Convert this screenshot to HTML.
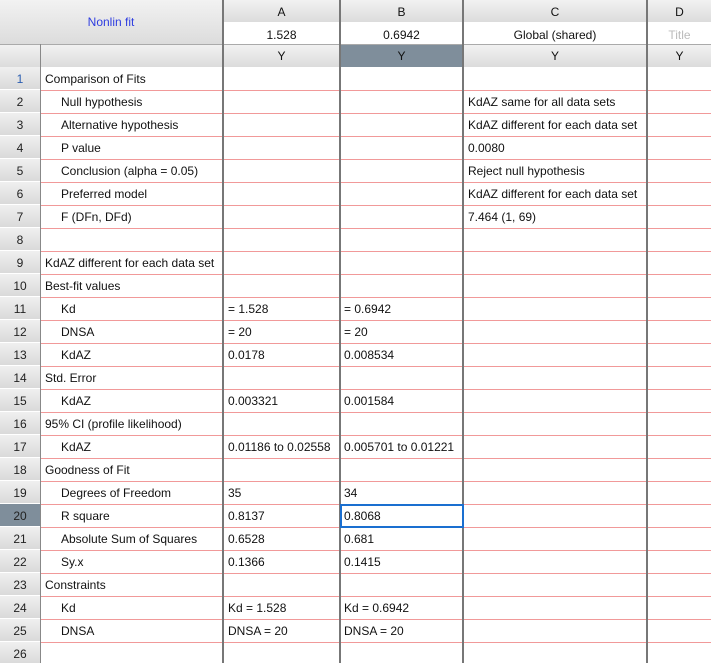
<!DOCTYPE html>
<html><head><meta charset="utf-8"><style>
html,body{margin:0;width:711px;height:663px;overflow:hidden}
body{background:#fff;font-family:"Liberation Sans",sans-serif;font-size:12px;color:#111;position:relative}
.a{position:absolute;box-sizing:border-box}
.hd{background:linear-gradient(#f2f2f2,#dcdcdc);text-align:center}
.row{position:absolute;left:0;width:711px;height:23px}
.row .n{position:absolute;left:0;width:40px;height:22px;top:0;background:linear-gradient(#f0f0f0,#dadada);border-bottom:1px solid #fff;text-align:center;line-height:25px;font-size:12px;color:#222}
.row .c{position:absolute;left:41px;right:0;height:23px;border-bottom:1px solid #f19999}
.row span{position:absolute;top:5px;white-space:nowrap}
.l{left:45px}.li{left:61px}.x{left:228px}.y{left:344px}.z{left:468px}
.v{position:absolute;top:0;height:663px;background:#777;width:2px}
</style></head><body>
<div class="a hd" style="left:0;top:0;width:222px;height:44px;color:#2e3de0;line-height:44px;padding-left:0">Nonlin fit</div>
<div class="a hd" style="left:0;top:45px;width:40px;height:22px"></div>
<div class="a hd" style="left:41px;top:45px;width:181px;height:22px"></div>
<div class="a hd" style="left:224px;top:0;width:115px;height:22px;line-height:24px">A</div>
<div class="a hd" style="left:341px;top:0;width:121px;height:22px;line-height:24px">B</div>
<div class="a hd" style="left:464px;top:0;width:182px;height:22px;line-height:24px">C</div>
<div class="a hd" style="left:648px;top:0;width:63px;height:22px;line-height:24px">D</div>
<div class="a" style="left:224px;top:23px;width:115px;height:21px;text-align:center;line-height:24px">1.528</div>
<div class="a" style="left:341px;top:23px;width:121px;height:21px;text-align:center;line-height:24px">0.6942</div>
<div class="a" style="left:464px;top:23px;width:182px;height:21px;text-align:center;line-height:24px">Global (shared)</div>
<div class="a" style="left:648px;top:23px;width:63px;height:21px;text-align:center;line-height:24px;color:#bbb">Title</div>
<div class="a" style="left:222px;top:44px;width:489px;height:1px;background:#aaa"></div>
<div class="a hd" style="left:224px;top:45px;width:115px;height:22px;line-height:22px">Y</div>
<div class="a" style="left:341px;top:45px;width:121px;height:22px;line-height:22px;background:#7f8e9b;text-align:center">Y</div>
<div class="a hd" style="left:464px;top:45px;width:182px;height:22px;line-height:22px">Y</div>
<div class="a hd" style="left:648px;top:45px;width:63px;height:22px;line-height:22px">Y</div>
<div class="a" style="left:0;top:44px;width:222px;height:1px;background:#aaa"></div>

<div class="row" style="top:67px"><div class="n" style="color:#2a5db0">1</div><div class="c"></div><span class="l">Comparison of Fits</span></div>
<div class="row" style="top:90px"><div class="n">2</div><div class="c"></div><span class="li">Null hypothesis</span><span class="z">KdAZ same for all data sets</span></div>
<div class="row" style="top:113px"><div class="n">3</div><div class="c"></div><span class="li">Alternative hypothesis</span><span class="z">KdAZ different for each data set</span></div>
<div class="row" style="top:136px"><div class="n">4</div><div class="c"></div><span class="li">P value</span><span class="z">0.0080</span></div>
<div class="row" style="top:159px"><div class="n">5</div><div class="c"></div><span class="li">Conclusion (alpha = 0.05)</span><span class="z">Reject null hypothesis</span></div>
<div class="row" style="top:182px"><div class="n">6</div><div class="c"></div><span class="li">Preferred model</span><span class="z">KdAZ different for each data set</span></div>
<div class="row" style="top:205px"><div class="n">7</div><div class="c"></div><span class="li">F (DFn, DFd)</span><span class="z">7.464 (1, 69)</span></div>
<div class="row" style="top:228px"><div class="n">8</div><div class="c"></div></div>
<div class="row" style="top:251px"><div class="n">9</div><div class="c"></div><span class="l">KdAZ different for each data set</span></div>
<div class="row" style="top:274px"><div class="n">10</div><div class="c"></div><span class="l">Best-fit values</span></div>
<div class="row" style="top:297px"><div class="n">11</div><div class="c"></div><span class="li">Kd</span><span class="x">= 1.528</span><span class="y">= 0.6942</span></div>
<div class="row" style="top:320px"><div class="n">12</div><div class="c"></div><span class="li">DNSA</span><span class="x">= 20</span><span class="y">= 20</span></div>
<div class="row" style="top:343px"><div class="n">13</div><div class="c"></div><span class="li">KdAZ</span><span class="x">0.0178</span><span class="y">0.008534</span></div>
<div class="row" style="top:366px"><div class="n">14</div><div class="c"></div><span class="l">Std. Error</span></div>
<div class="row" style="top:389px"><div class="n">15</div><div class="c"></div><span class="li">KdAZ</span><span class="x">0.003321</span><span class="y">0.001584</span></div>
<div class="row" style="top:412px"><div class="n">16</div><div class="c"></div><span class="l">95% CI (profile likelihood)</span></div>
<div class="row" style="top:435px"><div class="n">17</div><div class="c"></div><span class="li">KdAZ</span><span class="x">0.01186 to 0.02558</span><span class="y">0.005701 to 0.01221</span></div>
<div class="row" style="top:458px"><div class="n">18</div><div class="c"></div><span class="l">Goodness of Fit</span></div>
<div class="row" style="top:481px"><div class="n">19</div><div class="c"></div><span class="li">Degrees of Freedom</span><span class="x">35</span><span class="y">34</span></div>
<div class="row" style="top:504px"><div class="n" style="background:#7f8e9b">20</div><div class="c"></div><span class="li">R square</span><span class="x">0.8137</span><span class="y">0.8068</span></div>
<div class="row" style="top:527px"><div class="n">21</div><div class="c"></div><span class="li">Absolute Sum of Squares</span><span class="x">0.6528</span><span class="y">0.681</span></div>
<div class="row" style="top:550px"><div class="n">22</div><div class="c"></div><span class="li">Sy.x</span><span class="x">0.1366</span><span class="y">0.1415</span></div>
<div class="row" style="top:573px"><div class="n">23</div><div class="c"></div><span class="l">Constraints</span></div>
<div class="row" style="top:596px"><div class="n">24</div><div class="c"></div><span class="li">Kd</span><span class="x">Kd = 1.528</span><span class="y">Kd = 0.6942</span></div>
<div class="row" style="top:619px"><div class="n">25</div><div class="c"></div><span class="li">DNSA</span><span class="x">DNSA = 20</span><span class="y">DNSA = 20</span></div>
<div class="row" style="top:642px;height:21px"><div class="n">26</div></div>

<div class="v" style="left:40px;width:1px;top:44px;height:619px;background:#888"></div>
<div class="v" style="left:222px"></div>
<div class="v" style="left:339px"></div>
<div class="v" style="left:462px"></div>
<div class="v" style="left:646px"></div>
<div class="a" style="left:340px;top:504px;width:124px;height:24px;border:2px solid #1a6fd0"></div>
</body></html>
